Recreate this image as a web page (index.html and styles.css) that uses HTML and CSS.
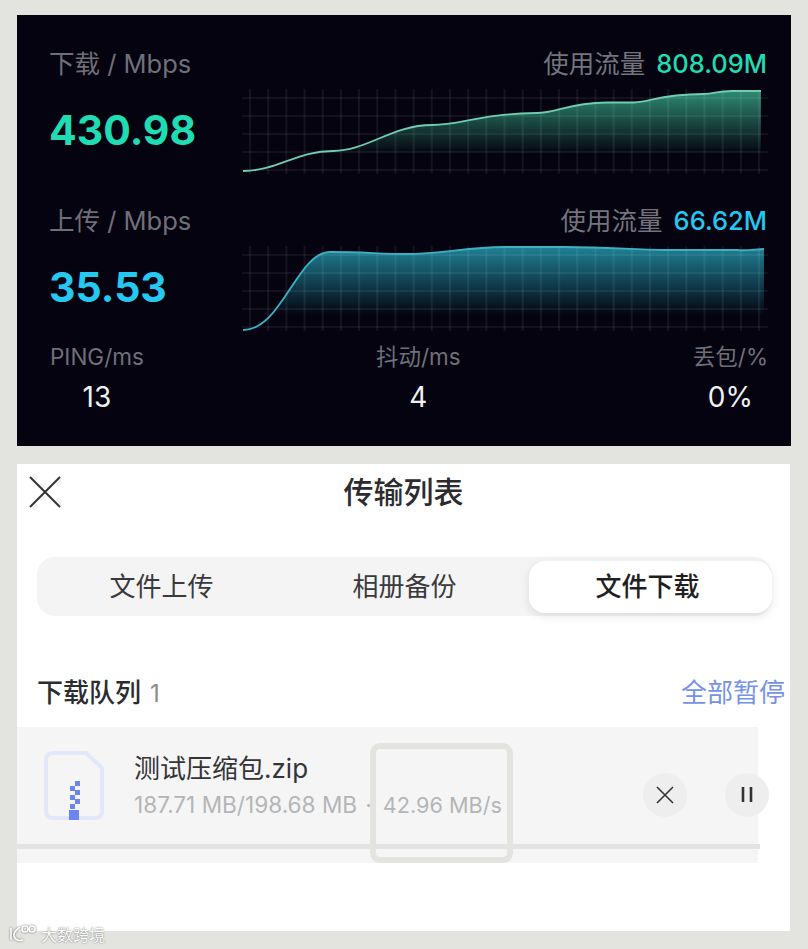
FILE: index.html
```html
<!DOCTYPE html>
<html lang="zh-CN">
<head>
  <meta charset="UTF-8">
  <meta name="viewport" content="width=device-width, initial-scale=1.0">
  <title>传输列表</title>
  <link rel="stylesheet" href="styles.css">
</head>
<body>
  <!-- speed test panel -->
  <section class="speed-panel">
    <div class="speed-row">
      <div class="speed-left">
        <div class="speed-label">下载 / Mbps</div>
        <div class="speed-value green">430.98</div>
      </div>
      <div class="speed-right">
        <div class="traffic">使用流量<span class="traffic-num green">808.09M</span></div>
        <svg class="chart" viewBox="0 0 526 90" width="526" height="90">
          <defs>
            <pattern id="gridV" patternUnits="userSpaceOnUse" x="7" y="0" width="18.18" height="90">
              <rect x="0" y="0" width="2" height="90" fill="#ffffff" fill-opacity="0.065"></rect>
            </pattern>
            <pattern id="gridH" patternUnits="userSpaceOnUse" x="0" y="10" width="526" height="18">
              <rect x="0" y="0" width="526" height="2" fill="#ffffff" fill-opacity="0.06"></rect>
            </pattern>
            <linearGradient id="fillGreen" gradientUnits="userSpaceOnUse" x1="0" y1="2" x2="0" y2="68">
              <stop offset="0" stop-color="#2f8f75"></stop>
              <stop offset="1" stop-color="#2f8f75" stop-opacity="0"></stop>
            </linearGradient>
            <linearGradient id="fillBlue" gradientUnits="userSpaceOnUse" x1="0" y1="2" x2="0" y2="72">
              <stop offset="0" stop-color="#1f8397"></stop>
              <stop offset="1" stop-color="#1f8397" stop-opacity="0"></stop>
            </linearGradient>
          </defs>
          <path fill="url(#fillGreen)" d="M1 84C35 84 55 64 91 64C125 64 150 38 190 38C220 38 235 27 295 26C315 26 325 16 365 15.5H392C410 15 415 7.5 462 7C472 7 475 4 490 4H519V87H1Z"></path>
          <rect x="7" y="2" width="512" height="85" fill="url(#gridV)"></rect>
          <rect x="0" y="10" width="526" height="74" fill="url(#gridH)"></rect>
          <path class="line-green" d="M1 84C35 84 55 64 91 64C125 64 150 38 190 38C220 38 235 27 295 26C315 26 325 16 365 15.5H392C410 15 415 7.5 462 7C472 7 475 4 490 4H519"></path>
        </svg>
      </div>
    </div>

    <div class="speed-row">
      <div class="speed-left">
        <div class="speed-label">上传 / Mbps</div>
        <div class="speed-value blue">35.53</div>
      </div>
      <div class="speed-right">
        <div class="traffic">使用流量<span class="traffic-num blue">66.62M</span></div>
        <svg class="chart" viewBox="0 0 526 90" width="526" height="90">
          <path fill="url(#fillBlue)" d="M1 86C40 86 55 8 88 8C120 8 140 10 165 10C200 10 225 3 262 3H322C370 3 390 6 425 6H495C505 7 515 5 522 5V87H1Z"></path>
          <rect x="7" y="2" width="512" height="85" fill="url(#gridV)"></rect>
          <rect x="0" y="10" width="526" height="74" fill="url(#gridH)"></rect>
          <path class="line-blue" d="M1 86C40 86 55 8 88 8C120 8 140 10 165 10C200 10 225 3 262 3H322C370 3 390 6 425 6H495C505 7 515 5 522 5"></path>
        </svg>
      </div>
    </div>

    <div class="stats">
      <div class="stat">
        <div class="stat-label">PING/ms</div>
        <div class="stat-value">13</div>
      </div>
      <div class="stat">
        <div class="stat-label">抖动/ms</div>
        <div class="stat-value">4</div>
      </div>
      <div class="stat">
        <div class="stat-label">丢包/%</div>
        <div class="stat-value">0%</div>
      </div>
    </div>
  </section>

  <!-- transfer list panel -->
  <section class="transfer-panel">
    <header class="topbar">
      <svg class="close-icon" viewBox="0 0 32 32" width="32" height="32">
        <path d="M1 1L31 31M31 1L1 31"></path>
      </svg>
      <h1 class="title">传输列表</h1>
    </header>

    <div class="tabs">
      <div class="tab">文件上传</div>
      <div class="tab">相册备份</div>
      <div class="tab active">文件下载</div>
    </div>

    <div class="queue-head">
      <div class="queue-title">下载队列<span class="queue-count">1</span></div>
      <div class="pause-all">全部暂停</div>
    </div>

    <div class="file-row">
      <svg class="file-icon" viewBox="0 0 60 70" width="60" height="70">
        <path class="file-outline" d="M9 2H42L58 17V60Q58 67 51 67H9Q2 67 2 60V9Q2 2 9 2Z"></path>
        <g class="zipper">
          <rect x="31" y="30" width="5" height="5"></rect>
          <rect x="26" y="35" width="5" height="5"></rect>
          <rect x="31" y="39" width="5" height="5"></rect>
          <rect x="26" y="44" width="5" height="5"></rect>
          <rect x="31" y="48" width="5" height="5"></rect>
          <rect x="26" y="53" width="5" height="5"></rect>
          <rect x="25" y="59" width="10" height="10"></rect>
        </g>
      </svg>
      <div class="file-info">
        <div class="file-name">测试压缩包.zip</div>
        <div class="file-meta"><span>187.71 MB/198.68 MB</span><span class="meta-dot">·</span><span class="meta-speed">42.96 MB/s</span></div>
      </div>
      <div class="file-actions">
        <div class="round-btn">
          <svg viewBox="0 0 18 18" width="18" height="18"><path d="M1 1L17 17M17 1L1 17"></path></svg>
        </div>
        <div class="round-btn">
          <svg viewBox="0 0 18 18" width="18" height="18"><path class="pause" d="M5 1V16M13 1V16"></path></svg>
        </div>
      </div>
      <div class="progress"></div>
      <div class="highlight"></div>
    </div>
  </section>

  <div class="watermark">
    <svg viewBox="0 0 28 20" width="28" height="20">
      <path d="M3 4V16M12 3Q5 8 6 12Q8 18 15 16"></path>
      <circle cx="17" cy="5" r="3"></circle>
      <circle cx="24" cy="5" r="3"></circle>
    </svg>
    <span>大数跨境</span>
  </div>
</body>
</html>
```

FILE: styles.css
```css
* {
  box-sizing: border-box;
}
html, body {
  height: 100%;
}
body {
  position: relative;
  margin: 0;
  padding: 15px 17px 0;
  background-color: #e3e4e0;
  font-family: Inter, "Noto Sans CJK SC", "Noto Sans", sans-serif;
  overflow: hidden;
}

/* speed panel */
.speed-panel {
  width: 774px;
  height: 431px;
  padding: 32px 23px 0 33px;
  background-color: #04030f;
}
.speed-row {
  display: grid;
  grid-template-columns: 192px 526px;
  height: 157px;
}
.speed-left {
  margin-left: -1px;
}
.speed-label {
  font-size: 25.5px;
  line-height: 34px;
  color: #6f6f79;
}
.speed-value {
  margin-top: 22px;
  font-size: 41px;
  line-height: 54px;
  font-weight: 700;
}
.green {
  color: #1fdcb2;
}
.blue {
  color: #25c8f0;
}
.traffic {
  height: 34px;
  margin-right: 1px;
  text-align: right;
  font-size: 25.5px;
  line-height: 34px;
  color: #74747e;
}
.traffic-num {
  margin-left: 11px;
  font-weight: 500;
}
.chart {
  display: block;
  margin-top: 6px;
  filter: blur(0.4px);
}
.line-green,
.line-blue {
  fill: none;
  stroke-width: 1.8;
}
.line-green {
  stroke: #6fcdb2;
}
.line-blue {
  stroke: #3fb0c4;
}
.stats {
  display: flex;
  justify-content: space-between;
  margin-top: -20px;
}
.stat {
  text-align: center;
}
.stat-label {
  font-size: 22.5px;
  line-height: 32px;
  color: #6f6f79;
}
.stat-value {
  margin-top: 8px;
  font-size: 28px;
  line-height: 32px;
  color: #f0f0f2;
}

/* transfer panel */
.transfer-panel {
  width: 773px;
  height: 467px;
  margin-top: 18px;
  background-color: #ffffff;
}
.topbar {
  position: relative;
  display: flex;
  justify-content: center;
  align-items: center;
  height: 56px;
}
.close-icon {
  position: absolute;
  left: 12px;
  top: 12px;
}
.close-icon path {
  fill: none;
  stroke: #333333;
  stroke-width: 2;
}
.title {
  margin: 0;
  font-size: 30px;
  line-height: 56px;
  font-weight: 500;
  color: #2c2c2e;
}
.tabs {
  display: grid;
  grid-template-columns: repeat(3, 243px);
  align-items: center;
  width: 735px;
  height: 59px;
  margin: 37px 0 0 20px;
  padding-left: 6px;
  border-radius: 18px;
  background-color: #f4f4f5;
}
.tab {
  height: 52px;
  padding-right: 6px;
  text-align: center;
  font-size: 26px;
  line-height: 52px;
  color: #3a3a3c;
}
.tab.active {
  border-radius: 16px;
  background-color: #ffffff;
  box-shadow: 0 3px 10px rgba(0, 0, 0, 0.1);
  font-weight: 500;
  color: #1f1f21;
}
.queue-head {
  display: flex;
  justify-content: space-between;
  align-items: center;
  height: 40px;
  margin: 57px 5px 0 20px;
}
.queue-title {
  font-size: 26px;
  font-weight: 500;
  line-height: 40px;
  color: #2c2c2e;
}
.queue-count {
  margin-left: 9px;
  font-size: 24px;
  font-weight: 400;
  color: #8a8a8e;
}
.pause-all {
  font-size: 26px;
  line-height: 40px;
  color: #7692e6;
}

.file-row {
  position: relative;
  display: flex;
  align-items: center;
  width: 741px;
  height: 136px;
  margin-top: 14px;
  padding: 0 0 19px 27px;
  background-color: #f5f5f6;
}
.file-outline {
  fill: none;
  stroke: #e3e7fa;
  stroke-width: 4;
}
.zipper rect {
  fill: #6b86f3;
}
.file-info {
  margin-left: 30px;
}
.file-name {
  font-size: 26px;
  line-height: 38px;
  color: #343436;
}
.file-meta {
  font-size: 22.6px;
  line-height: 34px;
  white-space: nowrap;
  color: #b4b5b7;
}
.meta-dot {
  margin: 0 11px 0 8px;
}
.meta-speed {
  font-size: 21.7px;
}
.file-actions {
  display: flex;
  gap: 38px;
  margin-top: 19px;
  margin-left: auto;
  margin-right: -11px;
}
.round-btn {
  display: flex;
  justify-content: center;
  align-items: center;
  width: 44px;
  height: 44px;
  border-radius: 50%;
  background-color: #eeeeef;
}
.round-btn path {
  fill: none;
  stroke: #333333;
  stroke-width: 1.6;
}
.round-btn .pause {
  stroke-width: 2.6;
}
.progress {
  position: absolute;
  left: 0;
  bottom: 14px;
  width: 743px;
  height: 5px;
  background-color: #e3e4e2;
}
.highlight {
  position: absolute;
  left: 353px;
  top: 16px;
  width: 143px;
  height: 120px;
  border: 6px solid #e3e4e0;
  border-radius: 10px;
}

.watermark {
  position: absolute;
  left: 8px;
  top: 923px;
  display: flex;
  align-items: center;
  gap: 5px;
  height: 22px;
  font-size: 16px;
  color: #ffffff;
  text-shadow: 0 0 1.5px #555555;
}
.watermark svg {
  filter: drop-shadow(0 0 1px #666666);
}
.watermark svg path,
.watermark svg circle {
  fill: none;
  stroke: #ffffff;
  stroke-width: 1.6;
}
```
